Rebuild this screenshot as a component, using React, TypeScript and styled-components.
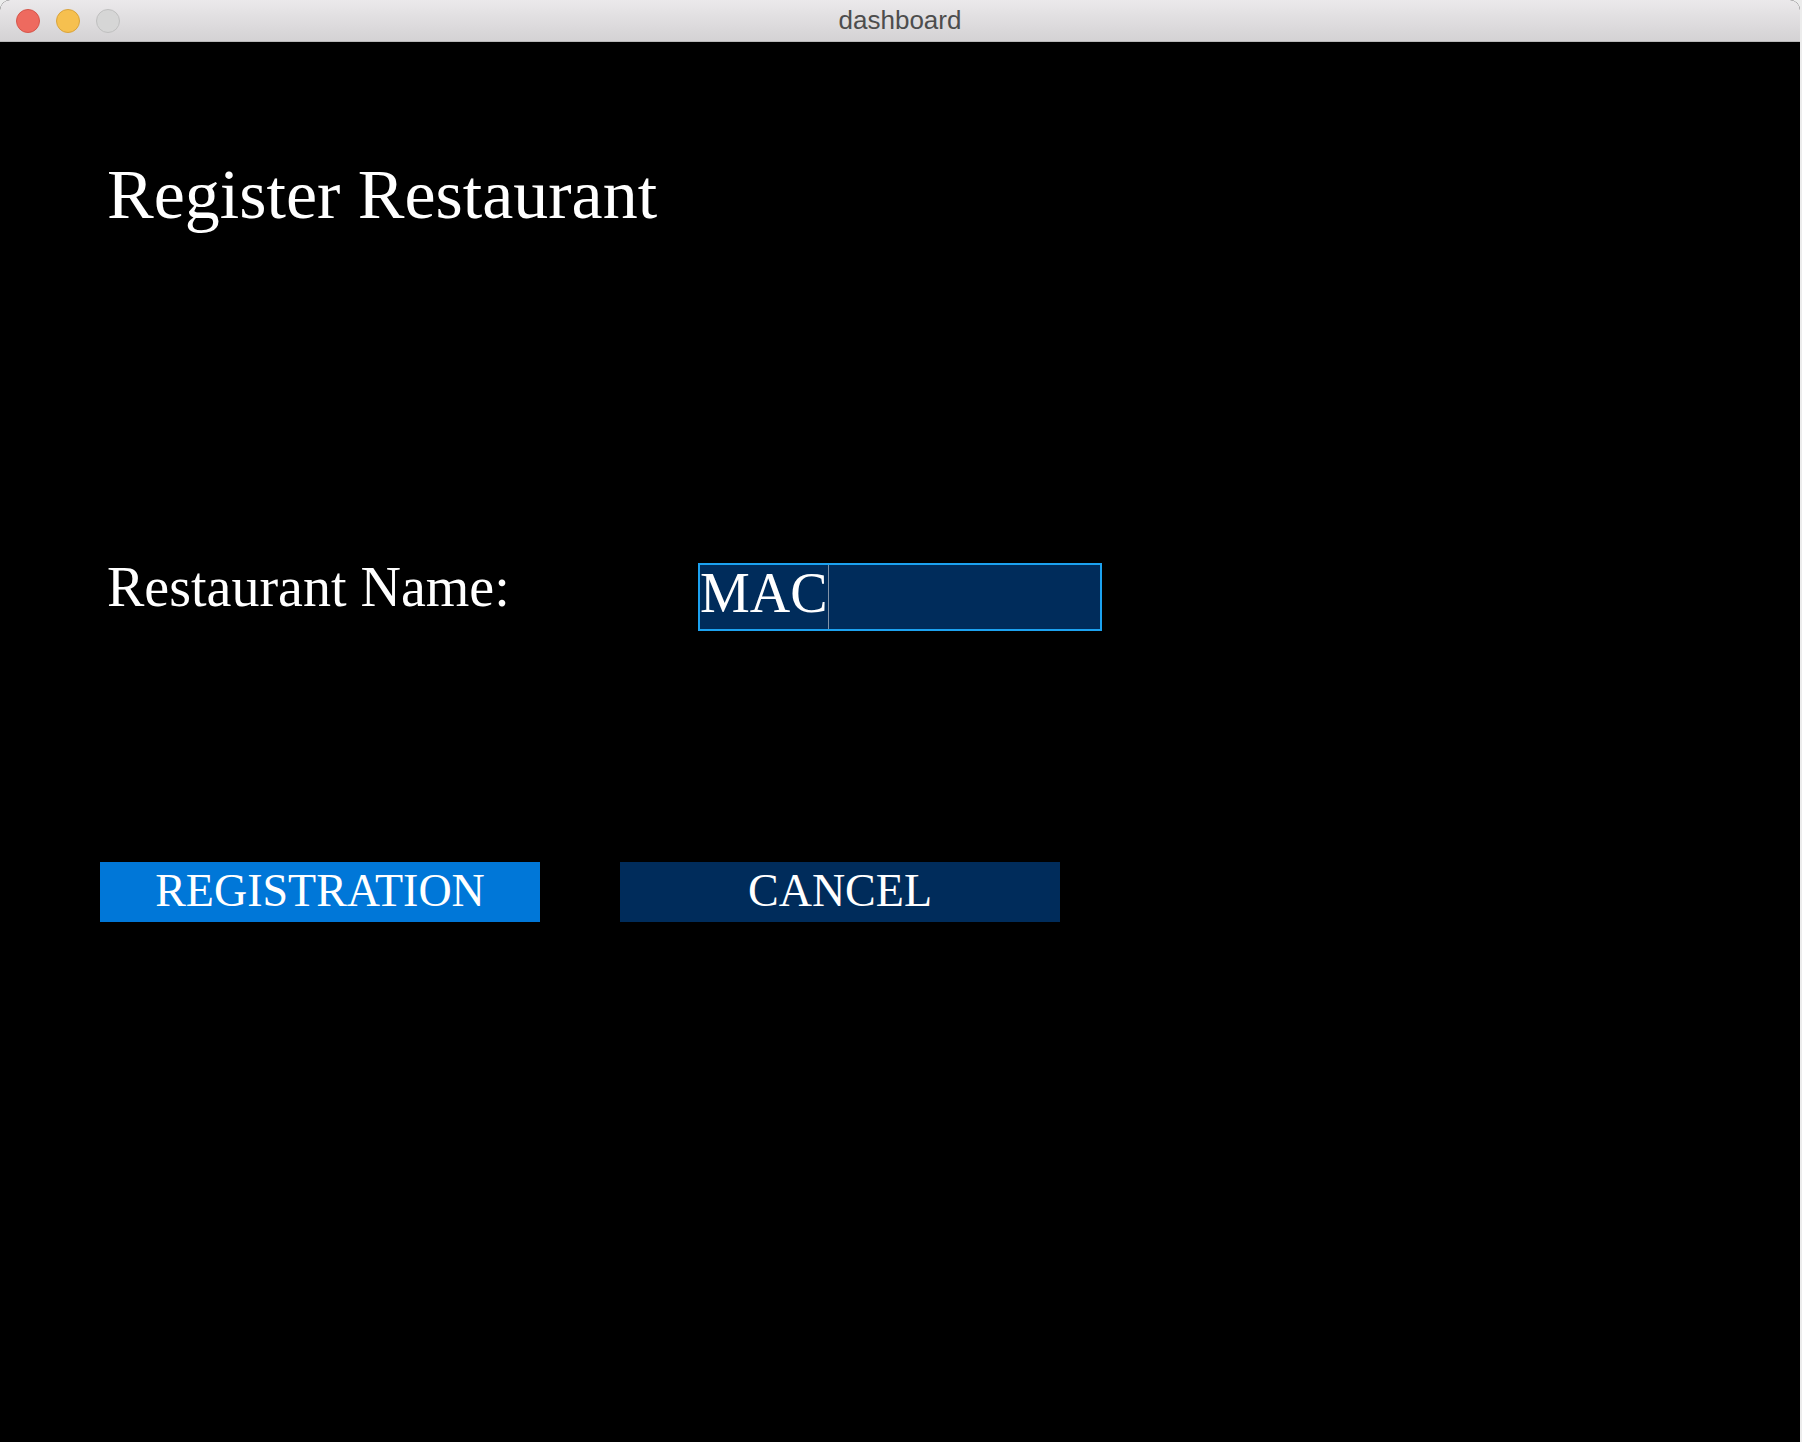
import React from "react";
import styled, { createGlobalStyle } from "styled-components";

const GlobalStyle = createGlobalStyle`
  html, body {
    margin: 0;
    padding: 0;
    background: #eeeeee;
  }
  #root {
    width: 1802px;
    height: 1442px;
  }
`;

const Desktop = styled.div`
  width: 1802px;
  height: 1442px;
  background: #ececec;
  overflow: hidden;
`;

const Window = styled.div`
  width: 1800px;
  height: 1442px;
  display: flex;
  flex-direction: column;
  border-radius: 10px 10px 0 0;
  overflow: hidden;
  background: #000;
`;

const TitleBar = styled.div`
  height: 41px;
  border-bottom: 1px solid #b9b9b9;
  background: linear-gradient(#ebe9eb, #d4d2d4);
  display: grid;
  grid-template-columns: 1fr auto 1fr;
  align-items: center;
  flex-shrink: 0;
`;

const Lights = styled.div`
  display: flex;
  gap: 16px;
  padding-left: 16px;
`;

const Light = styled.span<{ $fill: string; $edge: string }>`
  width: 24px;
  height: 24px;
  border-radius: 50%;
  box-sizing: border-box;
  background: ${(p) => p.$fill};
  border: 1px solid ${(p) => p.$edge};
`;

const WindowTitle = styled.div`
  font-family: "Liberation Sans", Arial, sans-serif;
  font-size: 26px;
  line-height: 41px;
  color: #4d4d4d;
`;

const Content = styled.main`
  flex: 1;
  background: #000;
  padding: 118px 0 0 100px;
  display: flex;
  flex-direction: column;
  align-items: flex-start;
`;

const Heading = styled.h1`
  margin: 0 0 329px 7px;
  font-family: "Liberation Serif", "Times New Roman", serif;
  font-weight: normal;
  font-size: 70px;
  line-height: 70px;
  color: #fff;
  white-space: nowrap;
`;

const FormRow = styled.div`
  display: flex;
  align-items: flex-start;
  margin-bottom: 231px;
`;

const Label = styled.label`
  width: 591px;
  padding-left: 7px;
  font-family: "Liberation Serif", "Times New Roman", serif;
  font-size: 56px;
  line-height: 56px;
  color: #fff;
  white-space: nowrap;
`;

const Field = styled.div`
  margin-top: 4px;
  width: 404px;
  height: 68px;
  box-sizing: border-box;
  border: 2px solid #1ca2f0;
  background: #002c5b;
  display: flex;
  align-items: stretch;
`;

const FieldText = styled.span`
  font-family: "Liberation Serif", "Times New Roman", serif;
  font-size: 56px;
  line-height: 56px;
  height: 56px;
  color: #fff;
  white-space: nowrap;
  align-self: flex-start;
`;

const Caret = styled.span`
  width: 1px;
  background: #8293a8;
`;

const ButtonRow = styled.div`
  display: flex;
  gap: 80px;
`;

const Button = styled.button<{ $primary?: boolean }>`
  width: 440px;
  height: 60px;
  box-sizing: border-box;
  padding: 0 0 3px;
  border: none;
  border-radius: 0;
  background: ${(p) => (p.$primary ? "#0077d8" : "#002c5b")};
  color: #fff;
  font-family: "Liberation Serif", "Times New Roman", serif;
  font-size: 46px;
  line-height: 57px;
  text-align: center;
  cursor: pointer;
`;

export default function App() {
  return (
    <>
      <GlobalStyle />
      <Desktop>
        <Window>
          <TitleBar>
            <Lights>
              <Light $fill="#ee6a5f" $edge="#d5564b" />
              <Light $fill="#f6c04f" $edge="#d9a33c" />
              <Light $fill="#d6d6d6" $edge="#bfbfbf" />
            </Lights>
            <WindowTitle>dashboard</WindowTitle>
            <span />
          </TitleBar>
          <Content>
            <Heading>Register Restaurant</Heading>
            <FormRow>
              <Label>Restaurant Name:</Label>
              <Field>
                <FieldText>MAC</FieldText>
                <Caret />
              </Field>
            </FormRow>
            <ButtonRow>
              <Button $primary>REGISTRATION</Button>
              <Button>CANCEL</Button>
            </ButtonRow>
          </Content>
        </Window>
      </Desktop>
    </>
  );
}
